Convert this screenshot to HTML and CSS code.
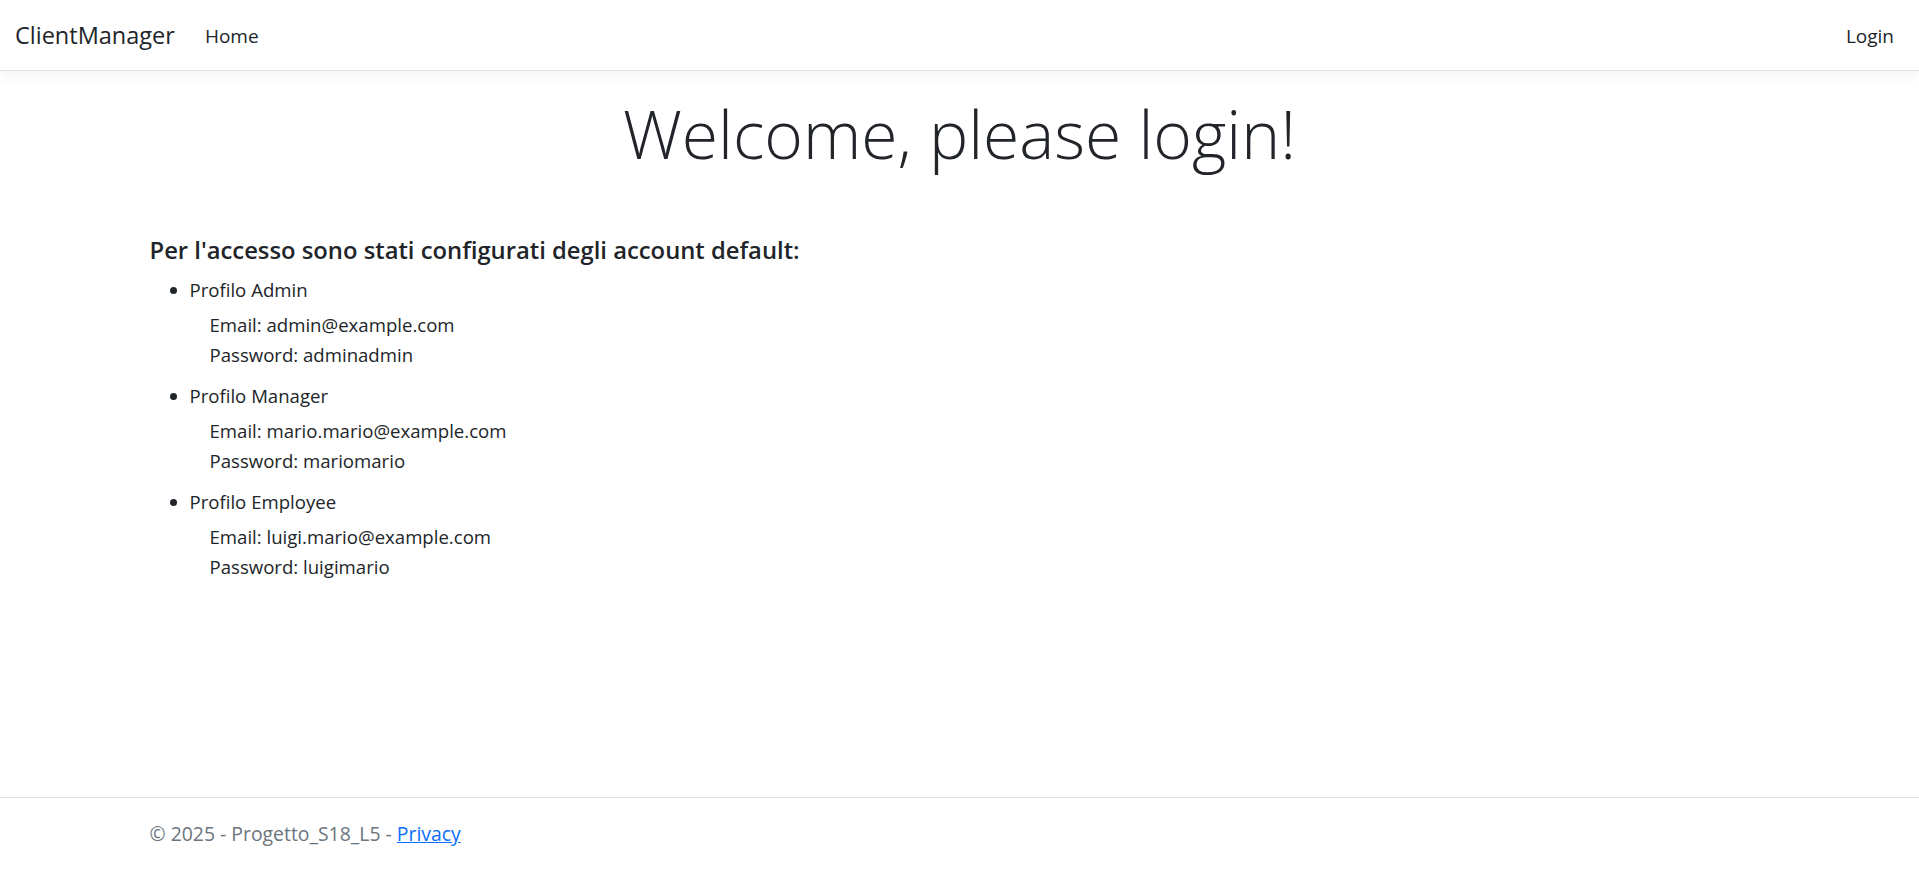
FILE: index.html
```html
<!DOCTYPE html>
<html lang="it">
<head>
<meta charset="utf-8">
<title>Home Page - ClientManager</title>
<link rel="stylesheet" href="styles.css">
</head>
<body>
<header>
  <nav class="navbar">
    <a class="brand" href="#">ClientManager</a>
    <ul class="nav-left">
      <li><a class="nav-link" href="#">Home</a></li>
    </ul>
    <ul class="nav-right">
      <li><a class="nav-link" href="#">Login</a></li>
    </ul>
  </nav>
</header>
<div class="container main">
  <div class="text-center">
    <h1 class="display">Welcome, please login!</h1>
  </div>
  <h5 class="intro">Per l'accesso sono stati configurati degli account default:</h5>
  <ul class="accounts">
    <li>Profilo Admin
      <div class="creds">
        <div>Email: admin@example.com</div>
        <div>Password: adminadmin</div>
      </div>
    </li>
    <li>Profilo Manager
      <div class="creds">
        <div>Email: mario.mario@example.com</div>
        <div>Password: mariomario</div>
      </div>
    </li>
    <li>Profilo Employee
      <div class="creds">
        <div>Email: luigi.mario@example.com</div>
        <div>Password: luigimario</div>
      </div>
    </li>
  </ul>
</div>
<footer class="footer">
  <div class="container">
    &copy; 2025 - Progetto_S18_L5 - <a href="#">Privacy</a>
  </div>
</footer>
</body>
</html>
```
FILE: styles.css
```css
* { box-sizing: border-box; }
html, body { margin: 0; padding: 0; }
body {
  font-family: "Open Sans", "Noto Sans", sans-serif;
  font-size: 20px;
  line-height: 30px;
  color: #212529;
  background: #fff;
  min-height: 100vh;
  display: flex;
  flex-direction: column;
}
a { color: #0d6efd; }

.navbar {
  display: flex;
  align-items: center;
  padding: 10px 15px;
  border-bottom: 1px solid #dee2e6;
  box-shadow: 0 5px 15px rgba(0,0,0,.05);
  margin-bottom: 20px;
}
.brand {
  font-size: 23.5px;
  line-height: 37.5px;
  padding: 7px 0 5px;
  margin-right: 20px;
  color: #212529;
  text-decoration: none;
  white-space: nowrap;
}
.nav-left, .nav-right {
  list-style: none;
  margin: 0;
  padding: 0;
  display: flex;
}
.nav-left { flex: 1; }
.nav-link {
  display: block;
  padding: 11px 10px 9px;
  font-size: 19px;
  line-height: 30px;
  color: #212529;
  text-decoration: none;
}

.container {
  width: 1650px;
  max-width: 100%;
  margin: 0 auto;
  padding: 0 15px;
}
.main { padding-bottom: 20px; }
.text-center { text-align: center; }
.display {
  font-size: 66px;
  font-weight: 300;
  line-height: 84px;
  margin: 0 0 10px;
}
.intro {
  font-size: 23.8px;
  font-weight: 600;
  line-height: 30px;
  margin: 60px 0 10px;
}
.accounts {
  margin: 0;
  padding-left: 40px;
  font-size: 18.6px;
}
.accounts li { margin-bottom: 11px; }
.creds {
  margin-top: 5px;
  padding-left: 20px;
}

.footer {
  margin-top: auto;
  border-top: 1px solid #dee2e6;
  color: #6c757d;
  font-size: 19.4px;
  line-height: 71px;
  white-space: nowrap;
}
```
